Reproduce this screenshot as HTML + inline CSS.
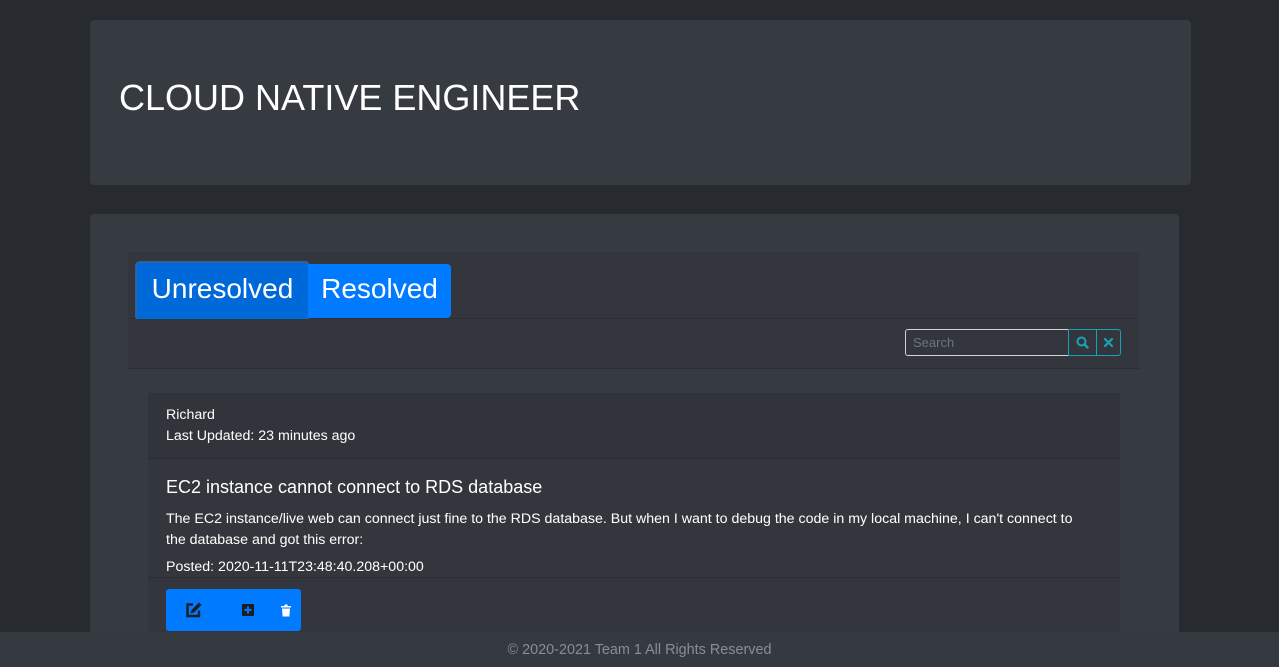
<!DOCTYPE html>
<html style="overflow:hidden;height:667px"><head><style>
body{margin:0;width:1279px;height:667px;background:#272a2f;font-family:"Liberation Sans",sans-serif;overflow:hidden;position:relative;color:#fff}
.abs{position:absolute}
.hdr{left:90px;top:20px;width:1101px;height:165px;background:#363a41;border-radius:4px}
.hdr h1{position:absolute;left:29px;top:58px;margin:0;font-weight:400;font-size:36px;line-height:40px}
.main{left:90px;top:214px;width:1089px;height:453px;background:#363a41;border-radius:4px 4px 0 0}
.tabs{left:128px;top:252px;width:1011px;height:66px;background:#33373d;border-bottom:1px solid #2b2f34}
.tool{left:128px;top:319px;width:1011px;height:49px;background:#33373d;border-bottom:1px solid #2b2f34}
.btn{position:absolute;font-size:28px;line-height:54px;color:#fff}
.post{left:148px;top:393px;width:972px;height:239px;background:#33373d}
.ph{left:148px;top:393px;width:972px;height:65px;background:#31353b;border-bottom:1px solid #2a2e33}
.pf{left:148px;top:577px;width:972px;height:55px;border-top:1px solid #2a2e33}
.t{font-size:14.2px;line-height:21px}
.foot{left:0;top:632px;width:1279px;height:35px;background:#343a40;text-align:center;color:#868e96;font-size:14.4px;line-height:37px}
</style></head><body>
<div class="abs hdr"><h1>CLOUD NATIVE ENGINEER</h1></div>
<div class="abs main"></div>
<div class="abs tabs">
 <div class="btn" style="left:8px;top:10px;width:171px;height:56px;background:#0069d9;border:1px solid #2a66aa;border-radius:4px;box-shadow:0 0 0 1px #2f5f99;text-align:center;line-height:52px">Unresolved</div>
 <div class="btn" style="left:180px;top:12px;width:143px;height:54px;background:#007bff;border-radius:0 4px 4px 0;text-align:center;line-height:50px">Resolved</div>
</div>
<div class="abs tool">
 <div class="abs" style="left:777px;top:10px;width:162px;height:25px;border:1px solid #ced4da;border-radius:3px 0 0 3px;color:#6c757d;font-size:13px;line-height:25px;text-indent:7px">Search</div>
 <div class="abs" style="left:940px;top:10px;width:27px;height:25px;border:1px solid #17a2b8"><svg width="27" height="25" viewBox="0 0 27 25"><circle cx="12.5" cy="11.5" r="4" fill="none" stroke="#17a2b8" stroke-width="2"/><path d="M15.5 14.5l3 3" stroke="#17a2b8" stroke-width="2.5" stroke-linecap="round"/></svg></div>
 <div class="abs" style="left:968px;top:10px;width:23px;height:25px;border:1px solid #17a2b8;border-radius:0 3px 3px 0"><svg width="23" height="25"><path d="M8 9l7 7M15 9l-7 7" stroke="#17a2b8" stroke-width="2.2" stroke-linecap="round"/></svg></div>
</div>
<div class="abs post"></div>
<div class="abs ph"><div class="abs t" style="left:18px;top:12px">Richard<br>Last Updated: 23 minutes ago</div></div>
<div class="abs" style="left:166px;top:476px;font-size:18px;line-height:22px">EC2 instance cannot connect to RDS database</div>
<div class="abs t" style="left:166px;top:509px;width:925px;line-height:21px">The EC2 instance/live web can connect just fine to the RDS database. But when I want to debug the code in my local machine, I can't connect to the database and got this error:</div>
<div class="abs t" style="left:166px;top:557px">Posted: 2020-11-11T23:48:40.208+00:00</div>
<div class="abs pf"></div>
<div class="abs" style="left:166px;top:589px;width:135px;height:42px;background:#007bff;border-radius:3px">
 <svg width="135" height="42"><g fill="none" stroke="#1b1f24" stroke-width="2.4"><path d="M27 15.5h-5.5v11.5h11.5v-5.5"/></g><path d="M24.5 24.5l1-3.5 7.5-7.5 2.5 2.5-7.5 7.5z" fill="#1b1f24"/><rect x="76" y="15" width="12" height="12" rx="1" fill="#1b1f24"/><path d="M82 17.5v7M78.5 21h7" stroke="#007bff" stroke-width="2"/><path d="M115 17h10v1.5h-10zM118.5 15.5h3v1.5h-3zM116 19.5h8l-.6 8h-6.8z" fill="#fff"/></svg>
</div>
<div class="abs foot">© 2020-2021 Team 1 All Rights Reserved</div>
</body></html>
